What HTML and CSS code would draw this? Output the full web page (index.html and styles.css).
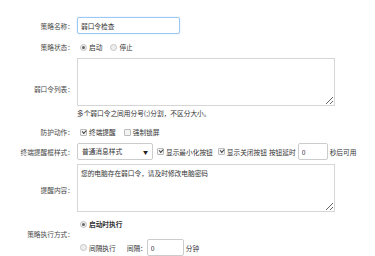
FILE: index.html
```html
<!DOCTYPE html>
<html lang="zh-cn">
<head>
    <meta charset="UTF-8">
    <meta name="viewport" content="width=device-width, initial-scale=1.0">
    <title>弱口令策略</title>
    <link rel="stylesheet" href="styles.css">
</head>
<body>
    <div class="form">
        <div class="row first">
            <div class="lbl">策略名称：</div>
            <div class="field"><input type="text" class="text name" value="弱口令检查"></div>
        </div>
        <div class="row line">
            <div class="lbl">策略状态：</div>
            <div class="field">
                <span class="opt wide"><span class="radio on"></span>启动</span>
                <span class="opt"><span class="radio"></span>停止</span>
            </div>
        </div>
        <div class="row tight">
            <div class="lbl">弱口令列表：</div>
            <div class="field block">
                <textarea class="area"></textarea>
                <div class="hint">多个弱口令之间用分号(;)分割，不区分大小。</div>
            </div>
        </div>
        <div class="row line">
            <div class="lbl">防护动作：</div>
            <div class="field">
                <span class="opt wide"><span class="chk on"></span>终端提醒</span>
                <span class="opt"><span class="chk"></span>强制锁屏</span>
            </div>
        </div>
        <div class="row tight">
            <div class="lbl">终端提醒框样式：</div>
            <div class="field">
                <div class="select">普通消息样式<span class="arrow">▼</span></div>
                <span class="opt"><span class="chk on"></span>显示最小化按钮</span>
                <span class="opt"><span class="chk on"></span>显示关闭按钮</span>
                <span class="opt">按钮延时</span><input type="text" class="text delay" value="0"><span class="opt after">秒后可用</span>
            </div>
        </div>
        <div class="row tight">
            <div class="lbl">提醒内容：</div>
            <div class="field block">
                <textarea class="area msg">您的电脑存在弱口令，请及时修改电脑密码</textarea>
            </div>
        </div>
        <div class="row">
            <div class="lbl raise">策略执行方式：</div>
            <div class="field block">
                <div class="sub"><span class="opt bold"><span class="radio on"></span>启动时执行</span></div>
                <div class="sub second">
                    <span class="opt"><span class="radio"></span>间隔执行</span>
                    <span class="opt gap">间隔：</span><input type="text" class="text mins" value="0"><span class="opt after">分钟</span>
                </div>
            </div>
        </div>
    </div>
</body>
</html>
```

FILE: styles.css
```css
body {
    margin: 0;
    font-family: "Noto Sans CJK SC", sans-serif;
    font-size: 6.7px;
    color: #333;
    background-color: #fff;
}

.form {
    padding-top: 17px;
}

.row {
    display: flex;
    align-items: center;
    line-height: 14px;
}

.row.line {
    margin-top: 6px;
}

.row.tight {
    margin-top: 4px;
}

.lbl {
    flex: 0 0 77px;
    box-sizing: border-box;
    padding-right: 3px;
    text-align: right;
    color: #4a4a4a;
}

.lbl.raise {
    padding-bottom: 4px;
}

.field {
    display: flex;
    align-items: center;
}

.field.block {
    display: block;
}

.text {
    box-sizing: border-box;
    height: 17px;
    border: 1px solid #ccc;
    border-radius: 2px;
    padding: 0 3px;
    font: inherit;
    color: #333;
    outline: none;
}

.name {
    width: 103px;
    border-color: #9cc8f4;
    box-shadow: 0 0 2px #cfe4fb;
}

.delay {
    width: 30px;
}

.mins {
    width: 37px;
}

.opt {
    display: inline-flex;
    align-items: center;
    margin-right: 2px;
    white-space: nowrap;
}

.opt.wide {
    margin-right: 5px;
}

.opt.after {
    margin-left: 2px;
}

.bold {
    font-weight: bold;
}

.gap {
    margin-left: 9px;
    margin-right: 0;
}

.radio {
    display: inline-block;
    width: 5px;
    height: 5px;
    margin: 0 2px 0 3px;
    border: 1px solid #c4c4c4;
    border-radius: 50%;
    background: #eee;
    position: relative;
}

.radio.on::after {
    content: "";
    position: absolute;
    left: 1px;
    top: 1px;
    width: 3px;
    height: 3px;
    border-radius: 50%;
    background: #666;
}

.chk {
    display: inline-block;
    width: 5px;
    height: 5px;
    margin: 0 2px 0 3px;
    border: 1px solid #bbb;
    border-radius: 1px;
    background: #f4f4f4;
    position: relative;
}

.chk.on::after {
    content: "";
    position: absolute;
    left: 1px;
    top: 0;
    width: 3px;
    height: 1.5px;
    border-left: 1px solid #444;
    border-bottom: 1px solid #444;
    transform: rotate(-45deg);
}

.area {
    display: block;
    box-sizing: border-box;
    width: 258px;
    height: 48px;
    margin: 0;
    border: 1px solid #d6d6d6;
    padding: 2px 3px;
    font: inherit;
    line-height: 12px;
    color: #333;
}

.msg {
    margin-bottom: 4px;
}

.hint {
    line-height: 12px;
    padding-top: 1px;
}

.select {
    box-sizing: border-box;
    width: 76px;
    height: 17px;
    border: 1px solid #ccc;
    border-radius: 2px;
    padding: 0 4px;
    line-height: 15px;
    display: flex;
    justify-content: space-between;
    margin-right: 1px;
}

.arrow {
    font-size: 5px;
    color: #222;
}

.sub {
    display: flex;
    align-items: center;
    height: 14px;
    margin-top: 1px;
}

.sub.second {
    height: 17px;
    margin-top: 8px;
}
```
